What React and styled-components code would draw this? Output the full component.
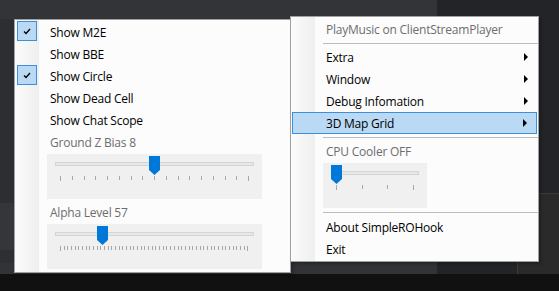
import styled, { createGlobalStyle } from "styled-components";

const GlobalStyle = createGlobalStyle`
  html, body {
    margin: 0;
    padding: 0;
    background: #111111;
  }
  body {
    font-family: "Open Sans", "Noto Sans", sans-serif;
    font-size: 12px;
    letter-spacing: -0.22px;
  }
`;

const Desktop = styled.div`
  position: relative;
  width: 559px;
  height: 291px;
  display: grid;
  grid-template-columns: 437px 1fr;
  grid-template-rows: 274px 1fr;
  overflow: hidden;
`;

const LeftPane = styled.div`
  display: flex;
  flex-direction: column;
  background: #2d2e32;
`;

const Band = styled.div`
  height: ${(p) => p.$h}px;
  flex: ${(p) => (p.$grow ? 1 : "none")};
  background: ${(p) => p.$bg};
`;

const RightPane = styled.div`
  display: grid;
  grid-template-columns: 80px 1fr;
  grid-template-rows: 193px 1fr;
  background: #232427;
`;

const DockCorner = styled.div`
  grid-column: 2;
  grid-row: 2;
  background: #2a2a2a;
  border-left: 1px solid #3a3a3c;
  border-top: 1px solid #3a3a3c;
`;

const BottomBand = styled.div`
  grid-column: 1 / span 2;
  background: #111111;
`;

const Menu = styled.div`
  position: absolute;
  left: ${(p) => p.$x}px;
  top: ${(p) => p.$y}px;
  width: ${(p) => p.$w}px;
  height: ${(p) => p.$h}px;
  box-sizing: border-box;
  border: 1px solid #a0a0a0;
  background: linear-gradient(to right, #fbfbfb 0, #efefef 24px, #fcfcfc 24px);
  padding-top: ${(p) => p.$pad}px;
  color: #000;
  box-shadow: 2px 2px 3px rgba(0, 0, 0, 0.25);
`;

const Item = styled.div`
  position: relative;
  height: 22px;
  display: flex;
  align-items: center;
  padding-left: 34px;
  margin: ${(p) => p.$mt || 0}px 1px 0;
  box-sizing: border-box;
  color: ${(p) => (p.$disabled ? "#6d6d6d" : "#000")};
  white-space: nowrap;
  ${(p) =>
    p.$active &&
    `
    background: #b9d9f5;
    border: 1px solid #3c8fd8;
    padding-left: 33px;
  `}
`;

const Check = styled.span`
  position: absolute;
  left: 1px;
  top: 0;
  width: 20px;
  height: 20px;
  box-sizing: border-box;
  background: #b9d9f5;
  border: 1px solid #3c8fd8;
  display: flex;
  align-items: center;
  justify-content: center;
`;

const Arrow = styled.span`
  position: absolute;
  right: 9px;
  top: 50%;
  margin-top: -4px;
  width: 0;
  height: 0;
  border-top: 4px solid transparent;
  border-bottom: 4px solid transparent;
  border-left: 4px solid #000;
`;

const Separator = styled.div`
  height: ${(p) => p.$h || 6}px;
  display: flex;
  align-items: center;
  padding-left: 32px;

  &::after {
    content: "";
    flex: 1;
    height: 1px;
    background: #bdbdbd;
  }
`;

const SliderBox = styled.div`
  position: relative;
  margin-left: 32px;
  margin-top: ${(p) => p.$mt || 0}px;
  width: ${(p) => p.$w}px;
  height: 45px;
  background: #f0f0f0;
`;

const Track = styled.div`
  position: absolute;
  left: 8px;
  right: 8px;
  top: 8px;
  height: 4px;
  box-sizing: border-box;
  background: #e6e8e8;
  border: 1px solid #d4d6d6;
`;

const Thumb = styled.svg`
  position: absolute;
  top: 2px;
`;

const Ticks = styled.div`
  position: absolute;
  left: 13px;
  right: 13px;
  top: 22px;
  display: flex;
  justify-content: space-between;
`;

const Tick = styled.span`
  width: 1px;
  height: ${(p) => (p.$edge ? 5 : 4)}px;
  background: #a8a8a8;
`;

const Slider = ({ width, max, step, value, mt }) => {
  const count = Math.floor(max / step) + 1;
  const span = width - 26;
  const center = 13 + (value / max) * span;
  return (
    <SliderBox $w={width} $mt={mt}>
      <Track />
      <Thumb
        width="11"
        height="19"
        viewBox="0 0 11 19"
        style={{ left: Math.round(center - 5.5) }}
      >
        <polygon points="0,0 11,0 11,14 5.5,19 0,14" fill="#0078d7" />
      </Thumb>
      <Ticks>
        {Array.from({ length: count }, (_, i) => (
          <Tick key={i} $edge={i === 0 || i === count - 1} />
        ))}
      </Ticks>
    </SliderBox>
  );
};

const CheckMark = () => (
  <svg width="8" height="7" viewBox="0 0 8 7">
    <path d="M1 3.5 L3 5.5 L7 1" stroke="#000" strokeWidth="1.3" fill="none" />
  </svg>
);

const leftItems = [
  { label: "Show M2E", checked: true },
  { label: "Show BBE" },
  { label: "Show Circle", checked: true },
  { label: "Show Dead Cell" },
  { label: "Show Chat Scope" },
];

export default function App() {
  return (
    <>
      <GlobalStyle />
      <Desktop>
        <LeftPane>
          <Band $h={19} $bg="#333438" />
          <Band $grow $bg="#2d2e32" />
          <Band $h={47} $bg="#35363a" />
          <Band $h={13} $bg="#2e2f33" />
          <Band $h={11} $bg="#323337" />
        </LeftPane>
        <RightPane>
          <DockCorner />
        </RightPane>
        <BottomBand />

        <Menu $x={14} $y={19} $w={277} $h={254} $pad={1}>
          {leftItems.map((it) => (
            <Item key={it.label}>
              {it.checked && (
                <Check>
                  <CheckMark />
                </Check>
              )}
              {it.label}
            </Item>
          ))}
          <Item $disabled>Ground Z Bias 8</Item>
          <Slider width={215} max={16} step={1} value={8} mt={1} />
          <Item $disabled $mt={2}>
            Alpha Level 57
          </Item>
          <Slider width={215} max={255} step={5} value={57} mt={1} />
        </Menu>

        <Menu $x={290} $y={16} $w={249} $h={246} $pad={1}>
          <Item $disabled>PlayMusic on ClientStreamPlayer</Item>
          <Separator />
          <Item>
            Extra
            <Arrow />
          </Item>
          <Item>
            Window
            <Arrow />
          </Item>
          <Item>
            Debug Infomation
            <Arrow />
          </Item>
          <Item $active>
            3D Map Grid
            <Arrow />
          </Item>
          <Separator />
          <Item $disabled>CPU Cooler OFF</Item>
          <Slider width={104} max={3} step={1} value={0} mt={1} />
          <Separator $h={8} />
          <Item>About SimpleROHook</Item>
          <Item>Exit</Item>
        </Menu>
      </Desktop>
    </>
  );
}
